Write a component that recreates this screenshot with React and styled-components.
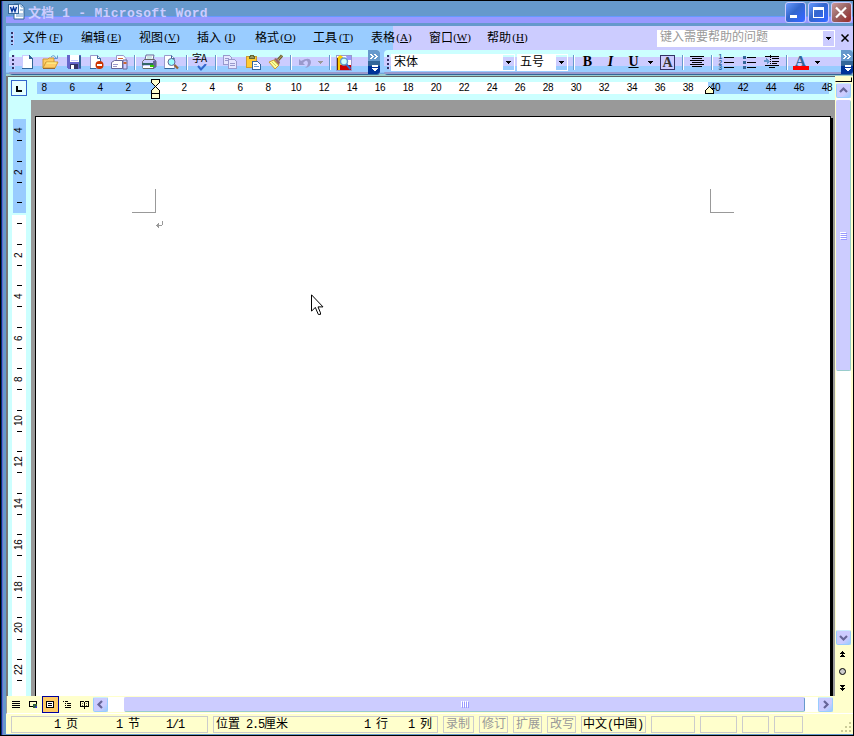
import React from 'react';
import styled, { createGlobalStyle } from 'styled-components';

const GlobalStyle = createGlobalStyle`
  body {
    margin: 0;
    overflow: hidden;
    background: #000;
    font-family: 'Noto Sans CJK SC', sans-serif;
    font-size: 12px;
    line-height: 1;
    cursor: default;
  }
  * { box-sizing: border-box; }
  svg { display: block; flex: none; }
`;

const Window = styled.div`
  width: 854px;
  height: 736px;
  display: flex;
  padding: 1px 1px 1px 0;
  background: #000;
`;

const LeftFrame = styled.div`
  flex: none;
  width: 6px;
  background: linear-gradient(to right, #000 1px, #003380 1px, #003380 2px, #6666cc 2px, #6666cc 3px, #6699cc 3px);
`;

const Content = styled.div`
  width: 847px;
  display: flex;
  flex-direction: column;
`;

const TitleBar = styled.div`
  display: flex;
  align-items: flex-start;
  height: 25px;
  padding: 0 1px 0 2px;
  background: linear-gradient(#6699cc 15px, #6699ff 15px, #6699ff 16px, #9999ff 16px, #9999ff 22px, #6699cc 22px);
`;

const TitleText = styled.div`
  flex: 1;
  padding: 4px 0 0 3px;
  color: #ccccff;
  font-size: 13px;
  line-height: 14px;
  font-weight: bold;
  white-space: pre;
`;

const TitleLatin = styled.span`
  font-family: 'Liberation Mono', monospace;
  font-size: 13px;
  letter-spacing: 0.3px;
`;

const TitleButton = styled.div`
  width: 21px;
  height: 21px;
  margin: 1px 0 0 2px;
  border: 1px solid #ccccff;
  border-radius: 3px;
  background: ${props => props.$close
    ? 'linear-gradient(135deg, #cc9999, #996666 45%, #993333 90%, #cc6666)'
    : 'linear-gradient(135deg, #6699ff, #3366cc 45%, #3366ff 90%, #6699ff)'};
`;

const MenuBar = styled.div`
  display: flex;
  align-items: center;
  height: 24px;
  padding-left: 5px;
  background: linear-gradient(to right, #99ccff 387px, #ccccff 387px);
`;

const Grip = styled.div`
  width: 3px;
  height: ${props => props.$h || 13}px;
  margin-right: ${props => props.$gap || 0}px;
  background: repeating-linear-gradient(#333366 0 2px, transparent 2px 4px);
  border-right: 1px solid #ccccff;
`;

const MenuItem = styled.div`
  display: flex;
  width: 58px;
  height: 14px;
  line-height: 11px;
  color: #000;
`;

const Key = styled.span`
  width: 18px;
  display: flex;
  justify-content: center;
  font-family: 'Liberation Serif', serif;
  font-size: 11px;
  line-height: 13px;
`;

const HelpBox = styled.div`
  display: flex;
  justify-content: space-between;
  align-items: center;
  width: 178px;
  height: 17px;
  margin: 0 6px 0 auto;
  padding: 1px 1px 1px 3px;
  background: #fff;
  color: #999;
  line-height: 12px;
`;

const HelpText = styled.span`
  margin-top: -4px;
`;

const DropButton = styled.div`
  display: flex;
  align-items: center;
  justify-content: center;
  width: 11px;
  height: 15px;
  background: ${props => props.$plain ? '#ccccff' : 'linear-gradient(#ccffff 2px, #ccccff 2px, #ccccff 11px, #99ccff 11px)'};
`;

const ToolbarArea = styled.div`
  display: flex;
  height: 26px;
  padding-left: 3px;
  background: linear-gradient(#99ccff 22px, #6699cc 24px, #99cccc 24px);
`;

const Toolbar = styled.div`
  display: flex;
  align-items: center;
  width: ${props => props.$w}px;
  height: 25px;
  margin-right: ${props => props.$gap || 0}px;
  padding: 0 0 1px 3px;
  border-radius: 4px 3px 3px 4px;
  overflow: hidden;
  background: linear-gradient(#ccffff 7px, #ccccff 7px, #ccccff 16px, #99ccff 16px, #99ccff 22px, #9999cc 22px, #9999cc 24px, #336699 24px);
`;

const Slot = styled.div`
  flex: none;
  display: flex;
  justify-content: center;
  align-items: center;
  width: ${props => props.$w || 23}px;
  height: 20px;
`;

const Separator = styled.div`
  flex: none;
  width: 2px;
  height: 15px;
  margin: 0 ${props => props.$r ?? 1}px 0 ${props => props.$l ?? 3}px;
  border-left: 1px solid #6699cc;
  border-right: 1px solid #fff;
`;

const Combo = styled.div`
  flex: none;
  display: flex;
  justify-content: space-between;
  width: ${props => props.$w}px;
  height: 17px;
  margin-right: 2px;
  padding: 1px 1px 1px 3px;
  background: #fff;
  line-height: 11px;
`;

const MoreButton = styled.div`
  flex: none;
  width: 12px;
  height: 24px;
  margin-left: auto;
  border-radius: 0 3px 3px 0;
  background: linear-gradient(#6699cc 11px, #336699 11px, #336699 16px, #003399 16px);
`;

const FormatLetter = styled.span`
  font-family: 'Liberation Serif', serif;
  font-size: 14px;
  line-height: 14px;
  font-weight: bold;
  font-style: ${props => props.$italic ? 'italic' : 'normal'};
  text-decoration: ${props => props.$underline ? 'underline' : 'none'};
`;

const BoxedLetter = styled(FormatLetter)`
  width: 15px;
  height: 15px;
  border: 1px solid #333366;
  background: #ccccff;
  color: #333;
  text-align: center;
  line-height: 14px;
`;

const FontColor = styled(FormatLetter)`
  width: 16px;
  height: 15px;
  color: #336699;
  text-align: center;
  font-size: 15px;
  line-height: 12px;
  border-bottom: 4px solid #ff0000;
`;

const Workspace = styled.div`
  display: flex;
  height: 620px;
  border-left: 2px solid #777;
`;

const SideRuler = styled.div`
  width: 23px;
  background: #ccffff;
  border-top: 1px solid #666;
`;

const TabSelector = styled.div`
  width: 16px;
  height: 16px;
  margin: 3px 0 23px 3px;
  border: 1px solid #3366cc;
  background: #e6ffff;
  padding: 5px 0 0 4px;
`;

const TabMark = styled.div`
  width: 6px;
  height: 6px;
  border-left: 2px solid #000;
  border-bottom: 2px solid #000;
`;

const SideZone = styled.div`
  width: ${props => props.$margin ? 13 : 14}px;
  height: ${props => props.$h}px;
  margin: 0 0 2px ${props => props.$margin ? 5 : 4}px;
  background: ${props => props.$margin ? '#99ccff' : '#fff'};
  overflow: hidden;
`;

const SideCells = styled.div`
  margin: ${props => props.$offset}px 0 0 ${props => props.$left || 0}px;
`;

const SideCell = styled.div`
  display: flex;
  flex-direction: column;
  align-items: center;
  justify-content: space-between;
  width: 12px;
  height: 41.55px;
  padding: 10px 0 9.5px;
`;

const SideTick = styled.div`
  width: 5px;
  height: 1px;
  background: ${props => props.$hidden ? 'transparent' : '#000'};
`;

const SideNumber = styled.div`
  height: 12px;
  writing-mode: vertical-rl;
  transform: rotate(180deg);
  display: flex;
  justify-content: center;
  font-family: 'Liberation Sans', sans-serif;
  font-size: 10px;
  line-height: 12px;
  letter-spacing: -0.4px;
`;

const Center = styled.div`
  width: 804px;
  display: flex;
  flex-direction: column;
`;

const TopRuler = styled.div`
  position: relative;
  display: flex;
  height: 24px;
  padding: 5px 0 0 6px;
  border-top: 1px solid #666;
  background: #ccffff;
`;

const RulerZone = styled.div`
  flex: none;
  display: flex;
  width: ${props => props.$w}px;
  height: 12px;
  padding-left: ${props => Math.max(props.$offset, 0)}px;
  background: ${props => props.$active ? '#fff' : '#99ccff'};

  & > :first-child { margin-left: ${props => Math.min(props.$offset, 0)}px; }
`;

const RulerCell = styled.div`
  flex: none;
  display: flex;
  flex-direction: column;
  align-items: center;
  width: 28px;
  font-family: 'Liberation Sans', sans-serif;
  font-size: 10px;
  line-height: 12px;
  letter-spacing: -0.4px;
`;

const RulerTick = styled.div`
  width: 1px;
  height: 3px;
  margin: 1px 1px 0 0;
  background: #999;
`;

const Indent = styled.div`
  position: absolute;
  left: ${props => props.$x}px;
  top: ${props => props.$y}px;
`;

const Desk = styled.div`
  flex: 1;
  padding: 16px 2px 0 4px;
  background: #999;
`;

const Page = styled.div`
  position: relative;
  width: 796px;
  height: 580px;
  border: 1px solid #000;
  border-bottom: none;
  background: #fff;
  box-shadow: 2px 2px 0 #000;
  clip-path: inset(0 -3px 0 0);
`;

const CropMark = styled.div`
  position: absolute;
  left: ${props => props.$x}px;
  top: 72px;
  width: 24px;
  height: 24px;
  border-bottom: 1px solid #999;
  border-${props => props.$side}: 1px solid #999;
`;

const OnPage = styled.div`
  position: absolute;
  left: ${props => props.$x}px;
  top: ${props => props.$y}px;
`;

const ScrollColumn = styled.div`
  width: 18px;
  display: flex;
  flex-direction: column;
  align-items: center;
  padding-right: 1px;
  background: #ffffcc;
`;

const Splitter = styled.div`
  align-self: stretch;
  height: 5px;
  margin: 1px 0 1px 0;
  border: 1px solid #000;
  border-top-color: #ffffcc;
  border-left-color: #ffffcc;
  background: #ffffcc;
`;

const ScrollTrack = styled.div`
  flex: 1;
  width: 15px;
  background: #fff;
`;

const ScrollButton = styled.div`
  flex: none;
  display: flex;
  align-items: center;
  justify-content: center;
  width: 15px;
  height: 15px;
  border: 1px solid #99ccff;
  border-top-color: #cceeff;
  border-radius: 2px;
  background: linear-gradient(135deg, #ccccff 65%, #99ccff);
`;

const ScrollThumb = styled.div`
  display: flex;
  align-items: center;
  justify-content: center;
  width: ${props => props.$w}px;
  height: ${props => props.$h}px;
  margin: ${props => props.$m || 0};
  border: 1px solid #ccccff;
  border-bottom-color: #99cccc;
  border-right-color: ${props => props.$w > props.$h ? '#6699cc' : '#99cccc'};
  border-radius: 2px;
  background: #ccccff;
`;

const BrowseButtons = styled.div`
  height: 51px;
  display: flex;
  flex-direction: column;
  align-items: center;
  justify-content: space-between;
  padding: 6px 2px 5px 0;
`;

const BottomRow = styled.div`
  display: flex;
  align-items: center;
  height: 18px;
  padding-left: 1px;
  border-bottom: 1px solid #fff;
  border-left: 1px solid #999;
  background: #ffffcc;
`;

const ViewButton = styled.div`
  display: flex;
  align-items: center;
  justify-content: center;
  width: 17px;
  height: 17px;
  border: 1px solid ${props => props.$on ? '#000099' : 'transparent'};
  background: ${props => props.$on ? '#ffcc66' : 'transparent'};
`;

const HTrack = styled.div`
  flex: none;
  width: 710px;
  height: 15px;
  background: #fff;
`;

const StatusBar = styled.div`
  display: flex;
  gap: 5px;
  height: 21px;
  padding: 2px 2px 0 5px;
  border-bottom: 1px solid #6699cc;
  background: #ffffcc;
`;

const StatusBox = styled.div`
  flex: none;
  display: flex;
  width: ${props => props.$w}px;
  height: 17px;
  padding: 0 0 0 ${props => props.$pad ?? 2}px;
  border: 1px solid #cccccc;
  color: ${props => props.$off ? '#999' : '#000'};
  line-height: 12px;
`;

const StatusField = styled.span`
  flex: none;
  width: ${props => props.$w}px;
  white-space: pre;
`;

const Latin = styled.span`
  font-family: 'Liberation Mono', monospace;
  font-size: 12px;
  letter-spacing: -1.2px;
`;

const SizeGrip = styled.div`
  width: 10px;
  height: 10px;
  margin: 6px 0 0 auto;
`;

// SimSun style text: narrow latin next to full width characters
const Mixed = ({ text }) => (
  <>
    {text.split(/([ -~]+)/).map((part, i) => (
      /^[ -~]+$/.test(part) ? <Latin key={i}>{part}</Latin> : part
    ))}
  </>
);

const Icon = ({ w = 16, h = 16, children }) => (
  <svg width={w} height={h} viewBox={`0 0 ${w} ${h}`} fill="none" shapeRendering="crispEdges">
    {children}
  </svg>
);

const Down = ({ color = '#000' }) => (
  <Icon w={5} h={3}><path d="M0 0h5v1h-1v1h-1v1h-1v-1h-1v-1h-1z" fill={color} /></Icon>
);

const Chevron = ({ turn = 0 }) => (
  <svg width="9" height="9" viewBox="0 0 9 9" fill="none">
    <path d="M1 6l3.5-3.5L8 6" stroke="#666699" strokeWidth="2.2" transform={`rotate(${turn} 4.5 4.5)`} />
  </svg>
);

const WordLogo = () => (
  <svg width="17" height="17" viewBox="0 0 17 17">
    <path d="M6 1h7l3 3v12H6z" fill="#fff" stroke="#336699" />
    <path d="M13 1v3h3M8 11h7M8 13h7M12 7h3" stroke="#6699cc" fill="none" />
    <rect x="0.5" y="1.5" width="10" height="9" fill="#e6eeff" stroke="#336699" />
    <path d="M2.5 4l1.500 4.500L5.500 4.500 7 8.500 8.500 4" stroke="#003399" strokeWidth="1.400" fill="none" />
  </svg>
);

const NewDoc = () => (
  <Icon>
    <path d="M2 1h7l3 3v11h-10z" fill="#fff" />
    <path d="M2.500 1v13M2 1.500h7" stroke="#ccccff" />
    <path d="M9 1h1v1h1v1h1v1h1v11h-11v-1h10v-9h-3z" fill="#336699" />
  </Icon>
);

const OpenFolder = () => (
  <svg width="17" height="16" viewBox="0 0 17 16">
    <path d="M1 14V5h5l1-1h5v10z" fill="#ffcc66" stroke="#cc9933" />
    <path d="M1 14L4 8h12l-3 6z" fill="#ffcc66" stroke="#cc9933" />
    <path d="M1 14.500h12" stroke="#996633" />
    <path d="M4.500 9h10" stroke="#ffff99" />
    <path d="M9 3q3-3 5 1M15.500 1.500v3h-3.500" fill="none" stroke="#6699cc" />
  </svg>
);

const SaveDisk = () => (
  <Icon>
    <path d="M1 1h14v14h-13l-1-1z" fill="#6666cc" />
    <path d="M13 2h2v12h-2z" fill="#336699" />
    <path d="M4 1h9v7h-9z" fill="#fff" />
    <path d="M5 6.500h7" stroke="#ccccff" />
    <path d="M4 10h8v5h-8z" fill="#333366" />
    <path d="M5 11h3v4h-3z" fill="#fff" />
  </Icon>
);

const Permission = () => (
  <svg width="16" height="16" viewBox="0 0 16 16">
    <path d="M1.500 1.500h7l3 3v10h-10z" fill="#fff" stroke="#9999cc" />
    <path d="M8.500 1.500v3h3v4" fill="none" stroke="#336699" />
    <path d="M1 14.500h6" stroke="#336699" />
    <circle cx="10.500" cy="11" r="4" fill="#cc3300" />
    <rect x="8" y="10" width="5" height="2" fill="#fff" />
  </svg>
);

const Mail = () => (
  <svg width="17" height="16" viewBox="0 0 17 16">
    <path d="M5.500 6V1.500h7l2.500 3V10H5.500z" fill="#fff" stroke="#9999cc" />
    <path d="M7 4.500h5" stroke="#cc6633" />
    <path d="M.5 8.500l3-2h8v8h-11z" fill="#fff" stroke="#666699" />
    <path d="M12 6h4v9h-4z" fill="#ccccff" stroke="#666699" />
    <path d="M2 10.500h5M2 12.500h4" stroke="#9999cc" />
    <rect x="12.500" y="8" width="3" height="2" fill="#cc6633" />
  </svg>
);

const Printer = () => (
  <svg width="16" height="16" viewBox="0 0 16 16">
    <path d="M4 6l1-5h8l-1 5z" fill="#fff" stroke="#666699" />
    <path d="M6 3h5M5.500 5h5" stroke="#99cccc" />
    <path d="M1.500 7.500l2-2h10l1.500 2v5l-2 2h-11z" fill="#ccccff" stroke="#666666" />
    <path d="M1 9h14v2H1z" fill="#336666" />
    <path d="M2 12h10v2H2z" fill="#fff" />
    <path d="M12 7l3-1v7l-3 2z" fill="#666699" />
    <rect x="9" y="11" width="4" height="2" fill="#33cc00" />
  </svg>
);

const Preview = () => (
  <svg width="17" height="16" viewBox="0 0 17 16">
    <path d="M1.500 1.500h7l3 3v10h-10z" fill="#fff" stroke="#9999cc" />
    <path d="M8.500 1.500v3h3M1.500 14.500h10" fill="none" stroke="#336699" />
    <circle cx="8.500" cy="8" r="3.500" fill="#99ffff" stroke="#666699" />
    <path d="M11.500 11l3.500 3.500" stroke="#996633" strokeWidth="2.300" />
  </svg>
);

const SpellText = styled.div`
  position: relative;
  width: 17px;
  height: 18px;
  font-size: 10px;
  line-height: 9px;
  white-space: nowrap;
  letter-spacing: -1px;
  & > svg { position: absolute; left: 5px; top: 11px; }
`;

const Copy = () => (
  <Icon>
    <path d="M1.500 1.500h6l2 2v7h-8z" fill="#e6e6ff" stroke="#9999cc" />
    <path d="M3 4.500h4M3 6.500h4" stroke="#9999cc" />
    <path d="M6.500 5.500h6l2 2v7h-8z" fill="#e6e6ff" stroke="#9999cc" />
    <path d="M8 9.500h5M8 11.500h5" stroke="#9999cc" />
  </Icon>
);

const Paste = () => (
  <Icon>
    <path d="M1.500 2.500h10v11h-10z" fill="#ffcc33" stroke="#cc9933" />
    <path d="M4 4v-2h1v-1h3v1h1v2z" fill="#999966" stroke="#666633" />
    <path d="M7.500 7.500h5l3 3v5h-8z" fill="#fff" stroke="#336699" />
    <path d="M9 10.500h3M9 12.500h5" stroke="#6699cc" />
  </Icon>
);

const Brush = () => (
  <svg width="16" height="16" viewBox="0 0 16 16">
    <path d="M10 6l4-4.500" stroke="#666633" strokeWidth="3" />
    <path d="M10 6l4-4.500" stroke="#cc9966" strokeWidth="1" />
    <path d="M1 8l5-2 5 5-4 4z" fill="#ffff99" stroke="#cc9933" />
    <path d="M6 5l2-1 4 4-1 3z" fill="#996666" />
    <path d="M4 8l4 4M6 7l4 4" stroke="#cccc66" />
  </svg>
);

const Undo = () => (
  <svg width="14" height="13" viewBox="0 0 14 13">
    <path d="M1 3v6h6L5 7q4-5 5 0 0 3-3 5 6-1 6-6-1-6-10-1z" fill="#9999cc" />
  </svg>
);

const Research = () => (
  <svg width="17" height="17" viewBox="0 0 17 17">
    <rect x="0.500" y="1.500" width="15" height="15" fill="#fff" stroke="#9999cc" />
    <path d="M10 2h5v4h-4z" fill="#9999ff" />
    <path d="M1 4l3-3 3 2v13H1z" fill="#ffcc00" />
    <path d="M1.500 4v12" stroke="#663300" />
    <path d="M4 11h11v5H4z" fill="#cc0000" />
    <circle cx="8" cy="7.500" r="3.500" fill="#ccffff" stroke="#6699cc" strokeWidth="1.500" />
    <path d="M10.500 10.500l4 4.500" stroke="#3366cc" strokeWidth="2" />
  </svg>
);

const More = () => (
  <Icon w={12} h={24}>
    <path d="M2 4h2v1h1v1h1v1h-1v1h-1v1h-2v-1h1v-1h1v-1h-1v-1h-1zM6 4h2v1h1v1h1v1h-1v1h-1v1h-2v-1h1v-1h1v-1h-1v-1h-1z" fill="#fff" />
    <path d="M4 15h6v2h-6zM4 18h6v1h-1v1h-1v1h-2v-1h-1v-1h-1z" fill="#fff" />
  </Icon>
);

const AlignCenter = () => (
  <Icon><path d="M1 2.500h14M3 4.500h10M1 6.500h14M3 8.500h10M1 10.500h14M3 12.500h10" stroke="#000" /></Icon>
);

const NumberedList = () => (
  <svg width="16" height="16" viewBox="0 0 16 16">
    <path d="M6 3.500h10M6 8.500h10M6 13.500h10" stroke="#000" shapeRendering="crispEdges" />
    <g fill="#336699" fontFamily="Liberation Sans" fontWeight="bold" fontSize="6.500">
      <text x="0.500" y="5">1</text>
      <text x="0.500" y="10.500">2</text>
      <text x="0.500" y="16">3</text>
    </g>
  </svg>
);

const BulletList = () => (
  <Icon>
    <path d="M6 3.500h9M6 8.500h9M6 13.500h9" stroke="#000" />
    <path d="M2 2h3v3h-3zM2 7h3v3h-3zM2 12h3v3h-3z" fill="#336699" />
  </Icon>
);

const IndentMore = () => (
  <Icon>
    <path d="M1 2.500h14M8 4.500h7M8 7h7M8 9.500h5M1 11.500h14M5 13.500h6" stroke="#000" />
    <path d="M6.500 1v14" stroke="#000" strokeDasharray="1 1" />
    <path d="M0 6h2v-2h1v1h1v1h1v1h1v1h-1v1h-1v1h-1v-2h-3z" fill="#6699cc" />
  </Icon>
);

const standardTools = [
  NewDoc, OpenFolder, SaveDisk, Permission, Mail, '|', Printer, Preview, '|', 'spell', '|', Copy, Paste, Brush, '|',
];

const menus = [
  ['文件', 'F'], ['编辑', 'E'], ['视图', 'V'], ['插入', 'I'], ['格式', 'O'],
  ['工具', 'T'], ['表格', 'A'], ['窗口', 'W'], ['帮助', 'H'],
];

const evens = (from, to) => {
  const list = [];
  for (let n = from; n <= to; n += 2) list.push(n);
  return list;
};

const statusModes = [['录制', 31], ['修订', 29], ['扩展', 29], ['改写', 29]];
const viewIcons = [
  <Icon key="n" w={9} h={9}><path d="M0 1.500h8M0 3.500h8M0 5.500h8M0 7.500h8" stroke="#000" /></Icon>,
  <Icon key="w" w={9} h={9}><path d="M.5 1.500h7v5h-7z" stroke="#000" /><path d="M4 4h4v4h-4z" fill="#336633" /><path d="M5 5h1v1h-1zM7 6h1v2h-2" fill="#3333cc" /></Icon>,
  <Icon key="p" w={9} h={9}><path d="M.5 1.500h7v6h-7z" fill="#fff" stroke="#000" /><path d="M2 3.500h4M2 5.500h4" stroke="#000" /></Icon>,
  <Icon key="o" w={9} h={9}><path d="M0 1.500h1M2 1.500h3M2 3.500h1M4 3.500h4M2 5.500h1M4 5.500h4M2 7.500h6" stroke="#000" /></Icon>,
  <Icon key="r" w={9} h={9}><path d="M.5 1.500h3l1 1 1-1h3v5h-3l-1 1-1-1h-3zM4.500 2v7" stroke="#000" /><path d="M2 3.500h1M2 5.500h1M6 3.500h1M6 5.500h1" stroke="#666" /></Icon>,
];

class App extends React.Component {
  renderStandard() {
    return (
      <Toolbar $w={371} $gap={4}>
        <Grip $h={15} $gap={1} />
        {standardTools.map((Tool, i) => {
          if (Tool === '|') return <Separator key={i} />;
          if (Tool === 'spell') {
            return (
              <Slot key={i}>
                <SpellText>字A
                  <svg width="10" height="8" viewBox="0 0 10 8" fill="none">
                    <path d="M1 2l3 3.500L9 0" stroke="#3366cc" strokeWidth="2" />
                  </svg>
                </SpellText>
              </Slot>
            );
          }
          return <Slot key={i}><Tool /></Slot>;
        })}
        <Slot><Undo /></Slot>
        <Slot $w={9}><Down color="#999999" /></Slot>
        <Separator $l={4} $r={2} />
        <Slot><Research /></Slot>
        <MoreButton><More /></MoreButton>
      </Toolbar>
    );
  }

  renderFormatting() {
    return (
      <Toolbar $w={469}>
        <Grip $h={15} $gap={1} />
        <Combo $w={124}>宋体<DropButton><Down /></DropButton></Combo>
        <Combo $w={51}>五号<DropButton><Down /></DropButton></Combo>
        <Separator />
        <Slot><FormatLetter>B</FormatLetter></Slot>
        <Slot><FormatLetter $italic>I</FormatLetter></Slot>
        <Slot><FormatLetter $underline>U</FormatLetter></Slot>
        <Slot $w={11}><Down /></Slot>
        <Slot><BoxedLetter>A</BoxedLetter></Slot>
        <Separator />
        <Slot><AlignCenter /></Slot>
        <Separator />
        <Slot><NumberedList /></Slot>
        <Slot><BulletList /></Slot>
        <Slot><IndentMore /></Slot>
        <Separator />
        <Slot><FontColor>A</FontColor></Slot>
        <Slot $w={10}><Down /></Slot>
        <MoreButton><More /></MoreButton>
      </Toolbar>
    );
  }

  renderSideRuler() {
    return (
      <SideRuler>
        <TabSelector><TabMark /></TabSelector>
        <SideZone $margin $h={94}>
          <SideCells $offset={-10}>
            {[4, 2].map(n => (
              <SideCell key={n}>
                <SideTick $hidden={n === 4} /><SideNumber>{n}</SideNumber><SideTick />
              </SideCell>
            ))}
            <SideCell><SideTick /></SideCell>
          </SideCells>
        </SideZone>
        <SideZone $h={481}>
          <SideCells $offset={-23} $left={1}>
            <SideCell><SideTick $hidden /><SideTick /></SideCell>
            {evens(2, 22).map(n => (
              <SideCell key={n}><SideTick /><SideNumber>{n}</SideNumber><SideTick /></SideCell>
            ))}
          </SideCells>
        </SideZone>
      </SideRuler>
    );
  }

  renderTopRuler() {
    return (
      <TopRuler>
        <RulerZone $w={118} $offset={-7}>
          {[8, 6, 4, 2].map(n => <RulerCell key={n}>{n}</RulerCell>)}
        </RulerZone>
        <RulerZone $w={553} $offset={15} $active>
          {evens(2, 38).map(n => <RulerCell key={n}>{n}<RulerTick /></RulerCell>)}
        </RulerZone>
        <RulerZone $w={121} $offset={-7}>
          {evens(40, 48).map(n => <RulerCell key={n}>{n}</RulerCell>)}
        </RulerZone>
        <Indent $x={120} $y={2}>
          <Icon w={9} h={21}>
            <path d="M.5 .5h8v3l-4 4 4 4v3h-8v-3l4-4-4-4z" fill="#ffffcc" stroke="#000" />
            <path d="M.5 14.500h8v5h-8z" fill="#ffffcc" stroke="#000" />
          </Icon>
        </Indent>
        <Indent $x={674} $y={9}>
          <Icon w={9} h={9}><path d="M.5 7.500v-3l4-4 4 4v3z" fill="#ffffcc" stroke="#000" /></Icon>
        </Indent>
      </TopRuler>
    );
  }

  render() {
    return (
      <>
        <GlobalStyle />
        <Window>
          <LeftFrame />
          <Content>
            <TitleBar>
              <Slot $w={17}><WordLogo /></Slot>
              <TitleText>文档<TitleLatin> 1 - Microsoft Word</TitleLatin></TitleText>
              <TitleButton><Icon w={18} h={18}><path d="M4 12h7v3h-7z" fill="#fff" /></Icon></TitleButton>
              <TitleButton>
                <Icon w={18} h={18}><path d="M4 4h11v11h-11zM5 7v7h9v-7z" fill="#fff" fillRule="evenodd" /></Icon>
              </TitleButton>
              <TitleButton $close>
                <svg width="18" height="19" viewBox="0 0 18 19"><path d="M4 4.500l10 10M14 4.500l-10 10" stroke="#fff" strokeWidth="2.200" /></svg>
              </TitleButton>
            </TitleBar>
            <MenuBar>
              <Grip $gap={9} />
              {menus.map(([label, key]) => (
                <MenuItem key={key}>{label}<Key>(<u>{key}</u>)</Key></MenuItem>
              ))}
              <HelpBox>
                <HelpText>键入需要帮助的问题</HelpText>
                <DropButton $plain><Down /></DropButton>
              </HelpBox>
              <svg width="8" height="8" viewBox="0 0 8 8"><path d="M.5 .5l7 7M7.500 .5l-7 7" stroke="#000" strokeWidth="1.500" /></svg>
              <Slot $w={4} />
            </MenuBar>
            <ToolbarArea>
              {this.renderStandard()}
              {this.renderFormatting()}
            </ToolbarArea>
            <Workspace>
              {this.renderSideRuler()}
              <Center>
                {this.renderTopRuler()}
                <Desk>
                  <Page>
                    <CropMark $x={96} $side="right" />
                    <CropMark $x={674} $side="left" />
                    <OnPage $x={120} $y={104}>
                      <Icon w={8} h={8}><path d="M6.500 0v4M0 4.500h6M1.500 3v3M2.500 2v5" stroke="#999" /></Icon>
                    </OnPage>
                    <OnPage $x={275} $y={177}>
                      <svg width="13" height="22" viewBox="0 0 13 22">
                        <path d="M.5 .8v16.400l3.800-3.800 3 7h2.200v-1.500l-2.500-6h5z" fill="#fff" stroke="#000" />
                      </svg>
                    </OnPage>
                  </Page>
                </Desk>
              </Center>
              <ScrollColumn>
                <Splitter />
                <ScrollButton><Chevron /></ScrollButton>
                <ScrollTrack>
                  <ScrollThumb $w={15} $h={271} $m="2px 0 0 0">
                    <Icon w={7} h={8}><path d="M0 .5h6M0 2.500h6M0 4.500h6M0 6.500h6" stroke="#fff" /><path d="M1 1.500h6M1 3.500h6M1 5.500h6M1 7.500h6" stroke="#9999ff" /></Icon>
                  </ScrollThumb>
                </ScrollTrack>
                <ScrollButton><Chevron turn={180} /></ScrollButton>
                <BrowseButtons>
                  <Icon w={5} h={7}><path d="M2 0h1v1h1v1h1v1h-5v-1h1v-1h1zM2 3h1v1h1v1h1v1h-5v-1h1v-1h1z" fill="#000" /></Icon>
                  <svg width="7" height="7" viewBox="0 0 7 7"><circle cx="3.500" cy="3.500" r="3" fill="#ccc" stroke="#000" /></svg>
                  <Icon w={5} h={7}><path d="M0 1h5v1h-1v1h-1v1h-1v-1h-1v-1h-1zM0 4h5v1h-1v1h-1v1h-1v-1h-1v-1h-1z" fill="#000" /></Icon>
                </BrowseButtons>
              </ScrollColumn>
            </Workspace>
            <BottomRow>
              {viewIcons.map((icon, i) => <ViewButton key={i} $on={i === 2}>{icon}</ViewButton>)}
              <ScrollButton><Chevron turn={-90} /></ScrollButton>
              <HTrack>
                <ScrollThumb $w={681} $h={15} $m="0 0 0 16px">
                  <Icon w={8} h={7}><path d="M.5 0v6M2.500 0v6M4.500 0v6M6.500 0v6" stroke="#fff" /><path d="M1.500 1v6M3.500 1v6M5.500 1v6M7.500 1v6" stroke="#9999ff" /></Icon>
                </ScrollThumb>
              </HTrack>
              <ScrollButton><Chevron turn={90} /></ScrollButton>
            </BottomRow>
            <StatusBar>
              <StatusBox $w={197} $pad={42}>
                <StatusField $w={62}><Mixed text="1 页" /></StatusField>
                <StatusField $w={50}><Mixed text="1 节" /></StatusField>
                <StatusField $w={20}><Mixed text="1/1" /></StatusField>
              </StatusBox>
              <StatusBox $w={225}>
                <StatusField $w={148}><Mixed text="位置 2.5厘米" /></StatusField>
                <StatusField $w={44}><Mixed text="1 行" /></StatusField>
                <StatusField $w={24}><Mixed text="1 列" /></StatusField>
              </StatusBox>
              {statusModes.map(([label, w]) => <StatusBox key={label} $w={w} $off>{label}</StatusBox>)}
              <StatusBox $w={65} $pad={1}><StatusField><Mixed text="中文(中国)" /></StatusField></StatusBox>
              <StatusBox $w={44} />
              <StatusBox $w={37} />
              <StatusBox $w={27} />
              <StatusBox $w={29} />
              <SizeGrip>
                <Icon w={10} h={10}><path d="M8 0h2v2h-2zM4 4h2v2h-2zM8 4h2v2h-2zM0 8h2v2h-2zM4 8h2v2h-2zM8 8h2v2h-2z" fill="#cccc99" /></Icon>
              </SizeGrip>
            </StatusBar>
          </Content>
        </Window>
      </>
    );
  }
}

export default App;
